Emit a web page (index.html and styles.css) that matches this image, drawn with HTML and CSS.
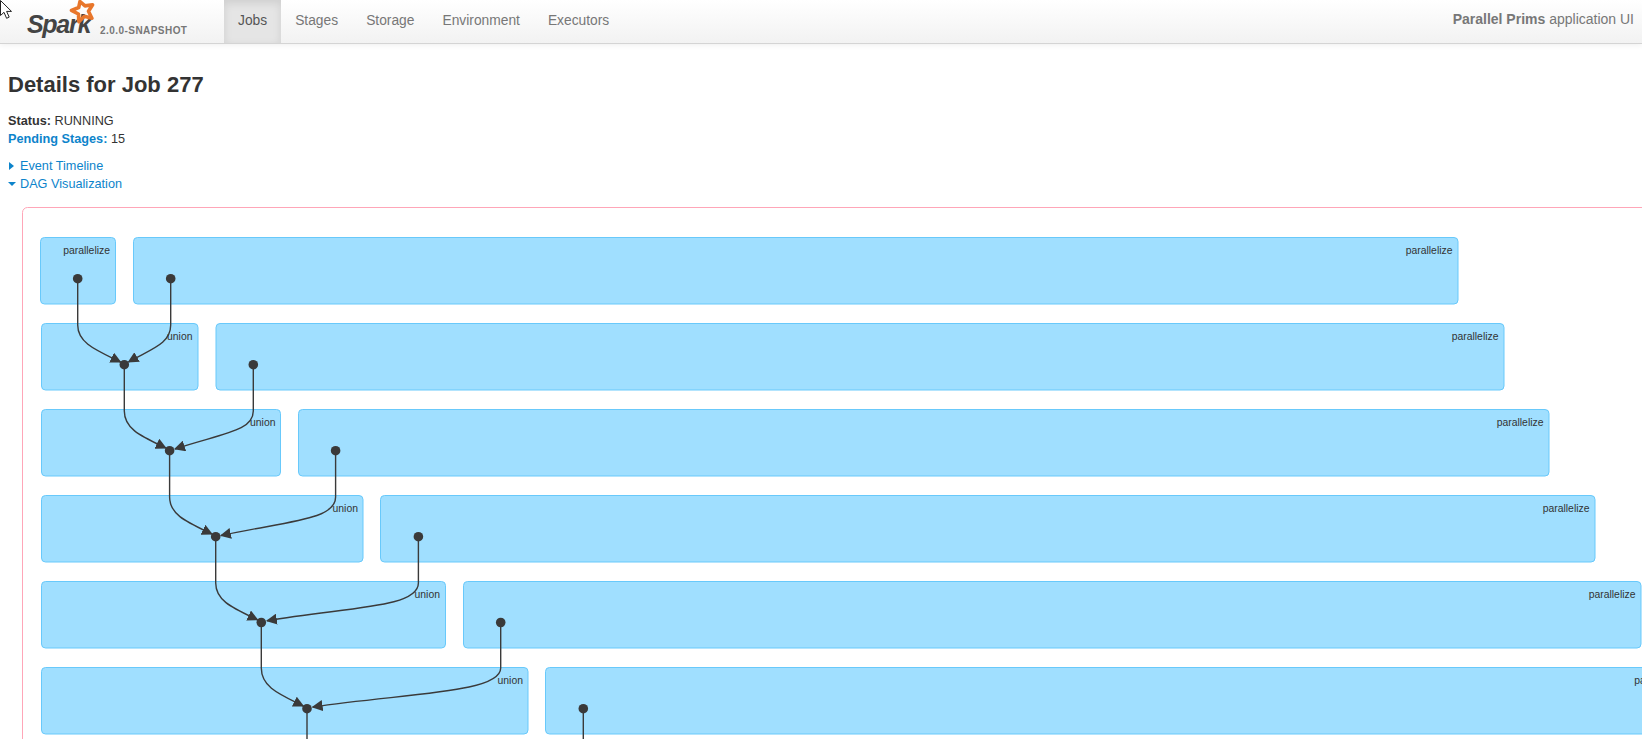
FILE: index.html
```html
<!DOCTYPE html>
<html lang="en">
<head>
    <meta charset="UTF-8">
    <title>Parallel Prims - Details for Job 277</title>
    <link rel="stylesheet" href="styles.css">
</head>
<body>

<svg class="cursor" width="14" height="20" viewBox="0 0 14 20">
    <path d="M0.5 0.5V15.5L4 12.3L6.6 18.3L9.2 17.1L6.6 11.4H11.5Z"/>
</svg>

<header class="navbar">
    <a class="brand" href="#">
        <span class="brand-name">Spark</span>
        <svg class="star" width="30" height="25" viewBox="0 0 30 25">
            <path d="M11 1.5L16 5.9L23.6 4.7L19.5 11.3L22.9 18.2L15.4 16.3L9.9 21.7L9.4 14L2.5 10.4L9.7 7.5Z"/>
        </svg>
        <span class="version">2.0.0-SNAPSHOT</span>
    </a>
    <nav class="tabs">
        <a class="active" href="#">Jobs</a>
        <a href="#">Stages</a>
        <a href="#">Storage</a>
        <a href="#">Environment</a>
        <a href="#">Executors</a>
    </nav>
    <p class="app-name"><strong>Parallel Prims</strong> application UI</p>
</header>

<main class="content">
    <h3>Details for Job 277</h3>

    <ul class="summary">
        <li><strong>Status:</strong> RUNNING</li>
        <li><a href="#"><strong>Pending Stages:</strong></a> 15</li>
    </ul>

    <div class="expander"><span class="arrow-right"></span><a href="#">Event Timeline</a></div>
    <div class="expander"><span class="arrow-down"></span><a href="#">DAG Visualization</a></div>

    <svg class="dag" width="1634" height="541" viewBox="8 198 1634 541">
        <defs>
            <marker id="head" viewBox="0 0 10 10" refX="9" refY="5" markerUnits="userSpaceOnUse" markerWidth="11" markerHeight="11" orient="auto">
                <path d="M0 0L10 5L0 10Z"/>
            </marker>
        </defs>

        <rect class="cluster" x="22.5" y="207.5" width="1700" height="600" rx="5"/>

        <!-- stages -->
        <rect class="stage" x="40.5" y="237.5" width="75" height="66.5" rx="4"/>
        <rect class="stage" x="133.5" y="237.5" width="1324.5" height="66.5" rx="4"/>
        <rect class="stage" x="41.5" y="323.5" width="156.5" height="66.5" rx="4"/>
        <rect class="stage" x="216" y="323.5" width="1288" height="66.5" rx="4"/>
        <rect class="stage" x="41.5" y="409.5" width="239" height="66.5" rx="4"/>
        <rect class="stage" x="298.5" y="409.5" width="1250.5" height="66.5" rx="4"/>
        <rect class="stage" x="41.5" y="495.5" width="321.5" height="66.5" rx="4"/>
        <rect class="stage" x="380.5" y="495.5" width="1214.5" height="66.5" rx="4"/>
        <rect class="stage" x="41.5" y="581.5" width="404" height="66.5" rx="4"/>
        <rect class="stage" x="463.5" y="581.5" width="1177.5" height="66.5" rx="4"/>
        <rect class="stage" x="41.5" y="667.5" width="486.5" height="66.5" rx="4"/>
        <rect class="stage" x="545.5" y="667.5" width="1141" height="66.5" rx="4"/>

        <text x="110" y="254">parallelize</text>
        <text x="1452.5" y="254">parallelize</text>
        <text x="192.5" y="340">union</text>
        <text x="1498.5" y="340">parallelize</text>
        <text x="275.5" y="426">union</text>
        <text x="1543.5" y="426">parallelize</text>
        <text x="358" y="512">union</text>
        <text x="1589.5" y="512">parallelize</text>
        <text x="440" y="598">union</text>
        <text x="1635.5" y="598">parallelize</text>
        <text x="523" y="684">union</text>
        <text x="1681" y="684">parallelize</text>

        <!-- edges -->
        <path class="edge" d="M77.7 279V325C77.7 343 96 350 120.5 362"/>
        <path class="edge" d="M170.7 279V325C170.7 344 151 349 128.5 362"/>
        <path class="edge" d="M124.3 365V411C124.3 429 141 436 165.8 448"/>
        <path class="edge" d="M253.3 365V411C253.3 431 224 433 175 449"/>
        <path class="edge" d="M169.6 451V497C169.6 515 187 522 211.9 534"/>
        <path class="edge" d="M335.6 451V497C335.6 520 288 521 221 535.5"/>
        <path class="edge" d="M215.7 537V583C215.7 601 233 608 257.5 619.8"/>
        <path class="edge" d="M418.4 537V583C418.4 608 348 607 267 620.8"/>
        <path class="edge" d="M261.3 622V668C261.3 687 279 694 303.2 706"/>
        <path class="edge" d="M500.7 622V668C500.7 693 408 693 312.7 707"/>
        <path class="edge plain" d="M307 709V739"/>
        <path class="edge plain" d="M583.3 709V739"/>

        <!-- nodes -->
        <circle cx="77.7" cy="278.7" r="4.8"/>
        <circle cx="170.7" cy="278.7" r="4.8"/>
        <circle cx="124.3" cy="364.7" r="4.8"/>
        <circle cx="253.3" cy="364.7" r="4.8"/>
        <circle cx="169.6" cy="450.7" r="4.8"/>
        <circle cx="335.6" cy="450.7" r="4.8"/>
        <circle cx="215.7" cy="536.7" r="4.8"/>
        <circle cx="418.4" cy="536.7" r="4.8"/>
        <circle cx="261.3" cy="622.5" r="4.8"/>
        <circle cx="500.7" cy="622.5" r="4.8"/>
        <circle cx="307" cy="708.7" r="4.8"/>
        <circle cx="583.3" cy="708.7" r="4.8"/>
    </svg>
</main>

</body>
</html>
```

FILE: styles.css
```css
html, body {
    margin: 0;
    height: 100%;
    overflow: hidden;
}
body {
    font-family: "Liberation Sans", Arial, sans-serif;
    font-size: 12.7px;
    line-height: 18px;
    color: #333;
    background: #fff;
}
a {
    color: #0d84cb;
    text-decoration: none;
}

/* mouse pointer caught in the screenshot */
.cursor {
    position: absolute;
    top: 0;
    left: 0;
    z-index: 1;
}
.cursor path {
    fill: #fff;
    stroke: #222;
    stroke-width: 1;
}

.navbar {
    display: flex;
    align-items: stretch;
    height: 43px;
    font-size: 13.8px;
    border-bottom: 1px solid #d4d4d4;
    background: linear-gradient(to bottom, #ffffff, #f2f2f2);
    box-shadow: 0 1px 6px rgba(0, 0, 0, 0.07);
}
.brand {
    position: relative;
    width: 224px;
    flex: none;
}
.star {
    position: absolute;
    top: 0;
    left: 69px;
}
.star path {
    fill: none;
    stroke: #e8762b;
    stroke-width: 3.6;
    stroke-linejoin: round;
}
.brand-name {
    position: absolute;
    top: 10px;
    left: 27px;
    font-size: 25px;
    line-height: 28px;
    font-weight: bold;
    font-style: italic;
    letter-spacing: -1.3px;
    color: #444;
}
.version {
    position: absolute;
    top: 22px;
    left: 100px;
    font-size: 10px;
    font-weight: bold;
    letter-spacing: 0.45px;
    color: #777;
}
.tabs {
    display: flex;
}
.tabs a {
    padding: 12px 14px 0;
    color: #777;
}
.tabs a.active {
    color: #555;
    background: #e5e5e5;
    box-shadow: inset 0 3px 8px rgba(0, 0, 0, 0.1);
}
.app-name {
    margin: 10px 8px 0 auto;
    font-size: 14px;
    color: #777;
}

.content {
    padding: 0 0 0 8px;
}
h3 {
    margin: 26px 0 12px;
    font-size: 22px;
    line-height: 30px;
    font-weight: bold;
}
.summary {
    margin: 0 0 9px;
    padding: 0;
    list-style: none;
}
.expander {
    display: flex;
    align-items: center;
    gap: 6px;
}
.arrow-right {
    width: 0;
    height: 0;
    margin-left: 1px;
    border-left: 5px solid #0d84cb;
    border-top: 4px solid transparent;
    border-bottom: 4px solid transparent;
}
.arrow-down {
    width: 0;
    height: 0;
    margin-right: -2px;
    border-top: 4px solid #0d84cb;
    border-left: 4px solid transparent;
    border-right: 4px solid transparent;
}

.dag {
    display: block;
    margin-top: 5px;
}
.cluster {
    fill: #fff;
    stroke: #ffa6b8;
}
.stage {
    fill: #a0dfff;
    stroke: #68c9fb;
}
.dag text {
    font-size: 10.4px;
    text-anchor: end;
    fill: #333;
}
.edge {
    fill: none;
    stroke: #3a3a3a;
    stroke-width: 1.4px;
    marker-end: url(#head);
}
.edge.plain {
    marker-end: none;
}
.dag circle,
.dag marker path {
    fill: #3a3a3a;
}
```
